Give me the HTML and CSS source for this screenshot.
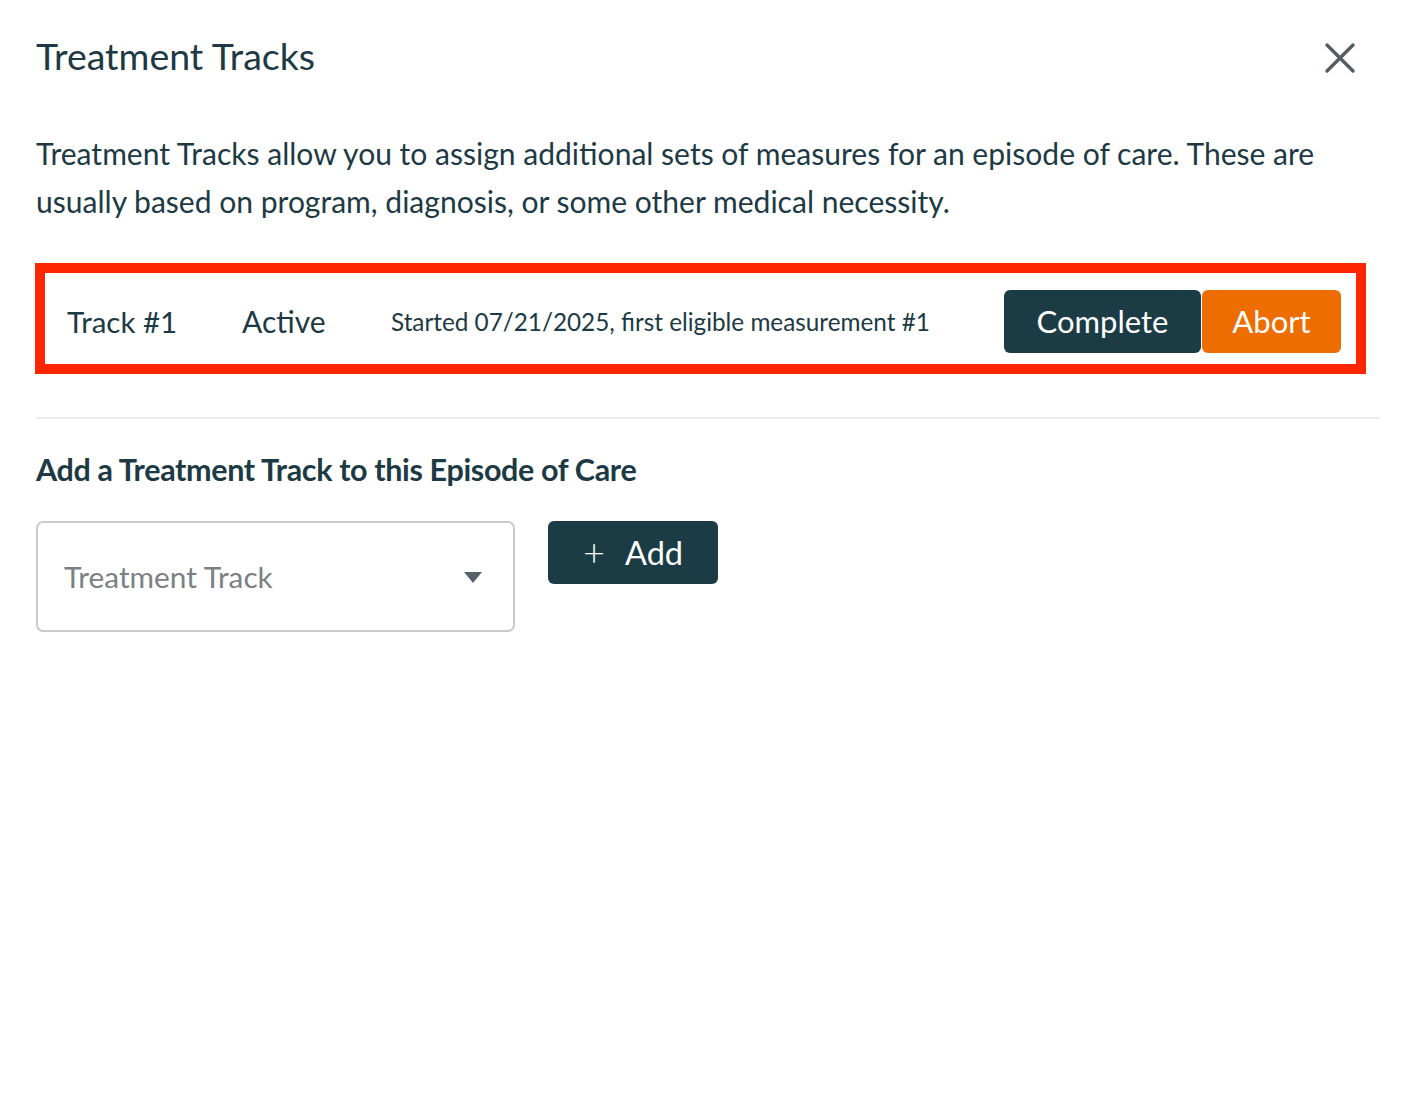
FILE: index.html
```html
<!DOCTYPE html>
<html lang="en">
<head>
<meta charset="utf-8">
<title>Treatment Tracks</title>
<link rel="stylesheet" href="styles.css">
</head>
<body>
<div class="dialog">
  <header class="dialog-header">
    <h1 class="title">Treatment Tracks</h1>
    <button class="close" aria-label="Close">
      <svg width="32" height="32" viewBox="0 0 32 32"><path d="M3 3 L29 29 M29 3 L3 29" stroke="#535d63" stroke-width="3.4" stroke-linecap="round" fill="none"/></svg>
    </button>
  </header>
  <p class="intro">Treatment Tracks allow you to assign additional sets of measures for an episode of care. These are usually based on program, diagnosis, or some other medical necessity.</p>
  <div class="track-row">
    <span class="track-name">Track #1</span>
    <span class="track-status">Active</span>
    <span class="track-info">Started 07/21/2025, first eligible measurement #1</span>
    <div class="track-actions">
      <button class="btn btn-dark">Complete</button>
      <button class="btn btn-orange">Abort</button>
    </div>
  </div>
  <hr class="divider">
  <h2 class="subtitle">Add a Treatment Track to this Episode of Care</h2>
  <div class="add-row">
    <div class="select">
      <span class="placeholder">Treatment Track</span>
      <span class="caret"></span>
    </div>
    <button class="btn btn-dark btn-add"><span class="plus">+</span>Add</button>
  </div>
</div>
</body>
</html>
```

FILE: styles.css
```css
* { box-sizing: border-box; }
html, body { margin: 0; padding: 0; background: #fff; }
body {
  font-family: "Lato", "Noto Sans", sans-serif;
  color: #1d3a44;
}
.dialog {
  padding: 26px 40px 40px 36px;
}
.dialog-header {
  display: flex;
  align-items: center;
  justify-content: space-between;
  height: 58px;
}
.title {
  margin: 0;
  font-weight: 400;
  font-size: 37.5px;
  color: #1d3a44;
}
.close {
  background: none;
  border: 0;
  padding: 0;
  margin-right: 24px;
  margin-top: 6px;
  width: 32px;
  height: 32px;
  cursor: pointer;
}
.intro {
  margin: 45px 0 0 0;
  font-size: 30.05px;
  line-height: 48px;
  color: #1d3a44;
}
.track-row {
  margin-top: 38px;
  margin-right: 14px;
  margin-left: -1px;
  border: 10px solid #fe2600;
  height: 111px;
  display: flex;
  align-items: center;
  padding: 5px 15px 0 22px;
}
.track-name {
  font-size: 29.5px;
  width: 175px;
}
.track-status {
  font-size: 30px;
  width: 149px;
}
.track-info {
  font-size: 24.3px;
  flex: 1;
}
.track-actions {
  display: flex;
  gap: 1px;
}
.btn {
  font-family: inherit;
  border: 0;
  border-radius: 6px;
  color: #fff;
  font-size: 31px;
  height: 63px;
  padding: 0 32px;
  cursor: pointer;
}
.btn-dark { background: #1b3b45; }
.btn-orange { background: #ee6d00; }
.track-actions .btn-dark { width: 197px; padding: 0; }
.track-actions .btn-orange { width: 139px; padding: 0; }
.divider {
  border: 0;
  border-top: 2px solid #ececec;
  margin: 43px 0 0 0;
}
.subtitle {
  margin: 32px 0 0 0;
  font-size: 30.5px;
  font-weight: 700;
  letter-spacing: -0.35px;
  color: #1d3a44;
}
.add-row {
  margin-top: 34px;
  display: flex;
  align-items: flex-start;
  gap: 33px;
}
.select {
  width: 479px;
  height: 111px;
  border: 2px solid #cacaca;
  border-radius: 7px;
  display: flex;
  align-items: center;
  justify-content: space-between;
  padding: 0 31px 0 26px;
}
.placeholder {
  font-size: 29.8px;
  color: #7b8084;
}
.caret {
  width: 0;
  height: 0;
  border-left: 9px solid transparent;
  border-right: 9px solid transparent;
  border-top: 11px solid #566269;
  margin-top: 2px;
}
.btn-add {
  width: 170px;
  padding: 0;
  display: flex;
  align-items: center;
  justify-content: center;
  font-size: 32.5px;
}
.plus {
  font-size: 38px;
  margin-right: 20px;
  font-weight: 300;
  line-height: 1;
  margin-top: -4px;
}
```
